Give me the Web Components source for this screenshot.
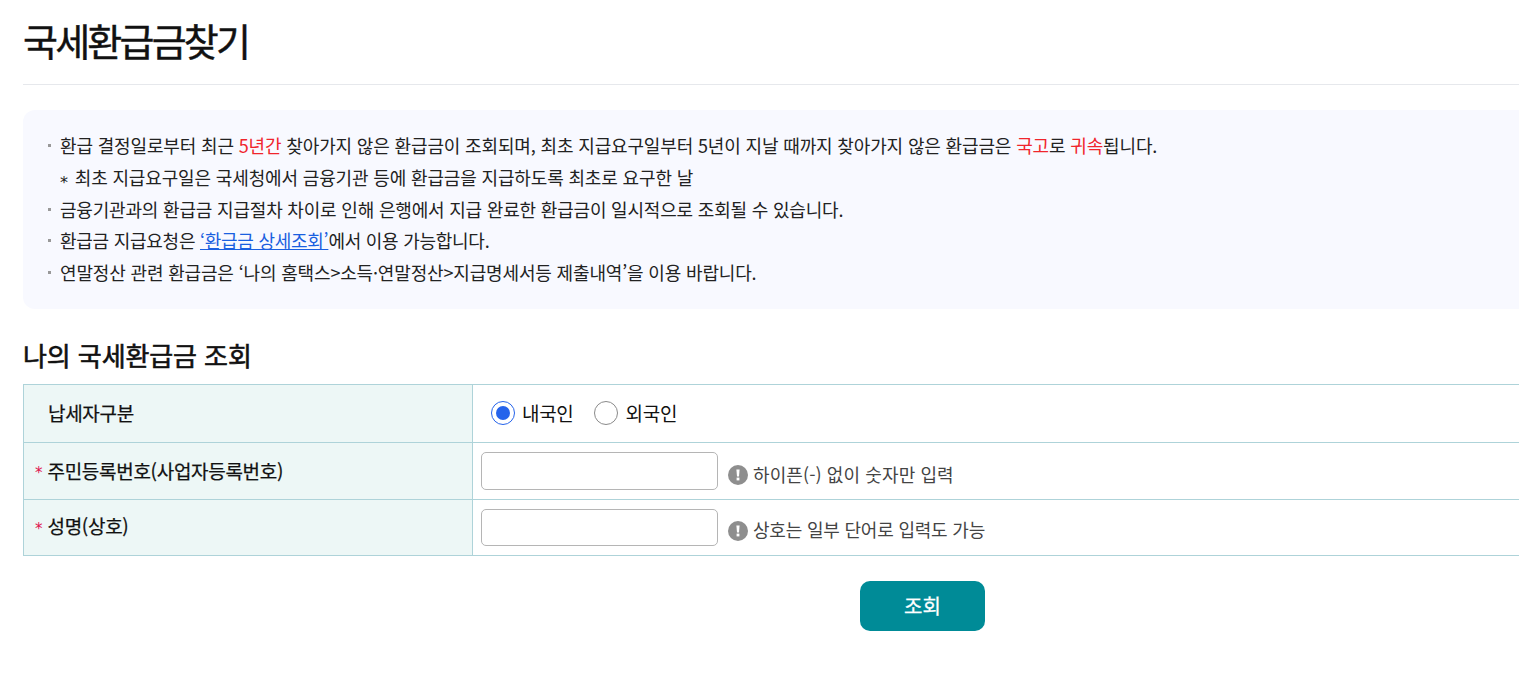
<!DOCTYPE html>
<html lang="ko"><head><meta charset="utf-8"><style>
html,body{margin:0;padding:0;background:#fff;overflow:hidden;height:679px}
body{font-family:"Noto Sans CJK KR","Noto Sans",sans-serif;color:#222;width:1519px}
.ast{font-family:"DejaVu Sans",sans-serif;font-size:16px;display:inline-block;vertical-align:-3px;line-height:1;margin-right:2px}
</style></head><body>
<refund-page>
  <page-title>국세환급금찾기</page-title>
  <notice-box>
    <notice-item>환급 결정일로부터 최근 <span style="color:#f0252c">5년간</span> 찾아가지 않은 환급금이 조회되며, 최초 지급요구일부터 5년이 지날 때까지 찾아가지 않은 환급금은 <span style="color:#f0252c">국고</span>로 <span style="color:#f0252c">귀속</span>됩니다.</notice-item>
    <notice-item plain><span class="ast">*</span> 최초 지급요구일은 국세청에서 금융기관 등에 환급금을 지급하도록 최초로 요구한 날</notice-item>
    <notice-item style="letter-spacing:-.19px">금융기관과의 환급금 지급절차 차이로 인해 은행에서 지급 완료한 환급금이 일시적으로 조회될 수 있습니다.</notice-item>
    <notice-item style="letter-spacing:-.26px">환급금 지급요청은 <a href="#" style="color:#1a5fe0">‘환급금 상세조회’</a>에서 이용 가능합니다.</notice-item>
    <notice-item style="letter-spacing:-.16px">연말정산 관련 환급금은 ‘나의 홈택스&gt;소득·연말정산&gt;지급명세서등 제출내역’을 이용 바랍니다.</notice-item>
  </notice-box>
  <section-title>나의 국세환급금 조회</section-title>
  <form-table>
    <form-row h="58" label="납세자구분" indent>
      <radio-opt checked>내국인</radio-opt><radio-opt>외국인</radio-opt>
    </form-row>
    <form-row h="57" label="주민등록번호(사업자등록번호)" required>
      <text-field h="38"></text-field><hint-text>하이픈(-) 없이 숫자만 입력</hint-text>
    </form-row>
    <form-row h="56" label="성명(상호)" required>
      <text-field h="37"></text-field><hint-text tight>상호는 일부 단어로 입력도 가능</hint-text>
    </form-row>
  </form-table>
  <action-bar><primary-button>조회</primary-button></action-bar>
</refund-page>
<script>
const def=(n,html,init)=>customElements.define(n,class extends HTMLElement{
  constructor(){super();this.attachShadow({mode:'open'}).innerHTML=html}
  connectedCallback(){init&&init(this)}
});
def('refund-page',`<style>:host{display:block;padding-left:23px;width:1496px}</style><slot></slot>`);
def('page-title',`<style>:host{display:block;height:84px;border-bottom:1px solid #e6e8ec;font-size:38px;font-weight:400;-webkit-text-stroke:.45px #111;letter-spacing:-2.8px;color:#111}
span{display:block;line-height:40px;padding-top:20px}</style><span><slot></slot></span>`);
def('notice-box',`<style>:host{display:block;margin-top:25px;height:199px;box-sizing:border-box;padding:20px 0 0 24px;background:#f8f9ff;border-radius:12px 0 0 12px;}</style><slot></slot>`);
def('notice-item',`<style>:host{display:flex;height:31.8px;line-height:31.8px;font-size:18px;letter-spacing:-.15px;color:#222;white-space:nowrap;position:relative;padding-left:13px}
i{position:absolute;left:1px;top:14px;width:3px;height:3px;background:#999}
:host([plain]) i{display:none}</style><i></i><span><slot></slot></span>`);
def('section-title',`<style>:host{display:block;margin-top:28px;height:47px;font-size:26px;font-weight:400;-webkit-text-stroke:.6px #111;line-height:36px;color:#111;letter-spacing:-.1px}</style><slot></slot>`);
def('form-table',`<style>:host{display:block;border-top:1px solid #aed3d9}</style><slot></slot>`);
def('form-row',`<style>:host{display:grid;grid-template-columns:450px 1fr;border-bottom:1px solid #aed3d9;box-sizing:border-box}
.l{background:#edf7f6;border-left:1px solid #aed3d9;border-right:1px solid #aed3d9;display:flex;align-items:center;padding-left:11px;font-size:19px;-webkit-text-stroke:.25px #111;color:#111;white-space:nowrap;letter-spacing:-.3px}
.s{font-family:"DejaVu Sans",sans-serif;color:#e0134f;width:12.5px;font-size:15px;display:none;-webkit-text-stroke:0;line-height:1;padding-top:5px}
:host([required]) .s{display:block}
:host([indent]) .l{padding-left:24px}
.t{margin-top:-2px}
:host([h="56"]) .t{margin-top:-4px}
:host([h="56"]) .s{padding-top:3px}
.c{display:flex;align-items:center;padding-left:8px}</style>
<div class="l"><span class="s">*</span><span class="t"></span></div><div class="c"><slot></slot></div>`,el=>{
  el.style.height=el.getAttribute('h')+'px';
  el.shadowRoot.querySelector('.t').textContent=el.getAttribute('label');
});
def('radio-opt',`<style>:host{display:inline-flex;align-items:center;font-size:19px;letter-spacing:-.3px;color:#111;margin-right:20px;gap:8px}
:host([checked]){margin-left:10px;gap:7px}
.o{width:24px;height:24px;border-radius:50%;border:1px solid #8a8a8a;box-sizing:border-box;background:#fff;display:flex;align-items:center;justify-content:center;margin-top:-1px}
:host([checked]) .o{border-color:#2563eb}
:host([checked]) .o::after{content:"";width:14px;height:14px;border-radius:50%;background:#2563eb}
.x{margin-top:-2px}</style>
<span class="o"></span><span class="x"><slot></slot></span>`);
def('text-field',`<style>:host{display:block;width:237px}
input{display:block;width:100%;box-sizing:border-box;border:1px solid #b5b5b5;border-radius:5px;background:#fff;margin:0;outline:0}</style><input type="text">`,el=>{
  el.shadowRoot.querySelector('input').style.height=el.getAttribute('h')+'px';
});
def('hint-text',`<style>:host{display:inline-flex;align-items:center;gap:5px;margin-left:10px;margin-top:6px;font-size:18px;letter-spacing:.1px;color:#444;white-space:nowrap}
:host([tight]){letter-spacing:-.2px}
svg{width:20px;height:20px;display:block;flex:none;margin-top:1px}
span{margin-top:-1px}
:host([tight]) span{margin-top:-3px}
:host([tight]) svg{margin-top:0}</style>
<svg viewBox="0 0 20 20"><circle cx="10" cy="10" r="10" fill="#8e8e8e"/><path d="M8.4 4.5h3.2l-.6 7h-2z" fill="#fff"/><rect x="8.6" y="12.6" width="2.8" height="2.8" fill="#fff"/></svg><span><slot></slot></span>`);
def('action-bar',`<style>:host{display:flex;margin-top:25px;padding-left:837px}</style><slot></slot>`);
def('primary-button',`<style>:host{display:flex;width:125px;height:50px;align-items:center;justify-content:center;background:#008b97;color:#fff;border-radius:10px;font-size:20px;-webkit-text-stroke:.3px #fff;padding-bottom:2px;box-sizing:border-box}</style><slot></slot>`);
</script>
</body></html>
